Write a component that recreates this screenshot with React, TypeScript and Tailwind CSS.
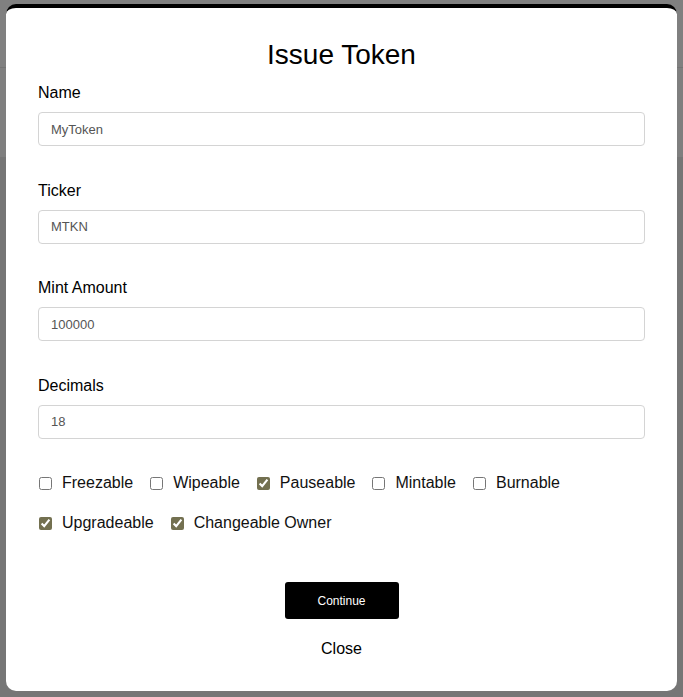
import { useState } from 'react';

const fields = [
  { label: 'Name', value: 'MyToken' },
  { label: 'Ticker', value: 'MTKN' },
  { label: 'Mint Amount', value: '100000' },
  { label: 'Decimals', value: '18' },
];

const flags = [
  { label: 'Freezable', checked: false },
  { label: 'Wipeable', checked: false },
  { label: 'Pauseable', checked: true },
  { label: 'Mintable', checked: false },
  { label: 'Burnable', checked: false },
  { label: 'Upgradeable', checked: true },
  { label: 'Changeable Owner', checked: true },
];

export default function App() {
  const [values, setValues] = useState(flags.map((f) => f.checked));

  return (
    <div className="relative h-[697px] w-[683px] overflow-hidden font-['Liberation_Sans',Arial,sans-serif]">
      {/* page behind the dim overlay */}
      <div className="flex h-full flex-col bg-[#767676]">
        <div className="h-[68px] border-b border-[#747474] bg-[#808080]" />
        <div className="h-[89px] bg-[#7f7f7f]" />
      </div>

      {/* Modal */}
      <div className="absolute left-[6px] top-[4px] w-[671px] h-[687px] rounded-[10px] border-t-4 border-black bg-white px-8">
        <h2 className="mt-[31px] text-center text-[28px] leading-8 text-black">Issue Token</h2>

        <div className="mt-[13px] flex flex-col">
          {fields.map((f) => (
            <div key={f.label} className="mb-[35.6px] flex flex-col">
              <label className="mb-[9.6px] text-base leading-[18.4px] text-black">{f.label}</label>
              <input
                defaultValue={f.value}
                className="h-[34px] w-full rounded border border-[#d4d4d4] px-3 text-[13px] text-[#555] outline-none"
              />
            </div>
          ))}
        </div>

        <div className="-mt-[3px] flex flex-wrap gap-x-4 gap-y-4">
          {flags.map((f, i) => (
            <label key={f.label} className="flex h-6 items-center gap-[10px] text-base text-[#111]">
              <input
                type="checkbox"
                checked={values[i]}
                onChange={() => setValues(values.map((v, j) => (j === i ? !v : v)))}
                className="ml-[1px] h-[13px] w-[13px] accent-[#737050]"
              />
              {f.label}
            </label>
          ))}
        </div>

        <div className="mt-[47px] flex flex-col items-center">
          <button className="h-[37px] w-[114px] rounded-[3px] bg-black text-[12px] text-white">Continue</button>
          <button className="mt-[18px] text-base text-black">Close</button>
        </div>
      </div>
    </div>
  );
}
